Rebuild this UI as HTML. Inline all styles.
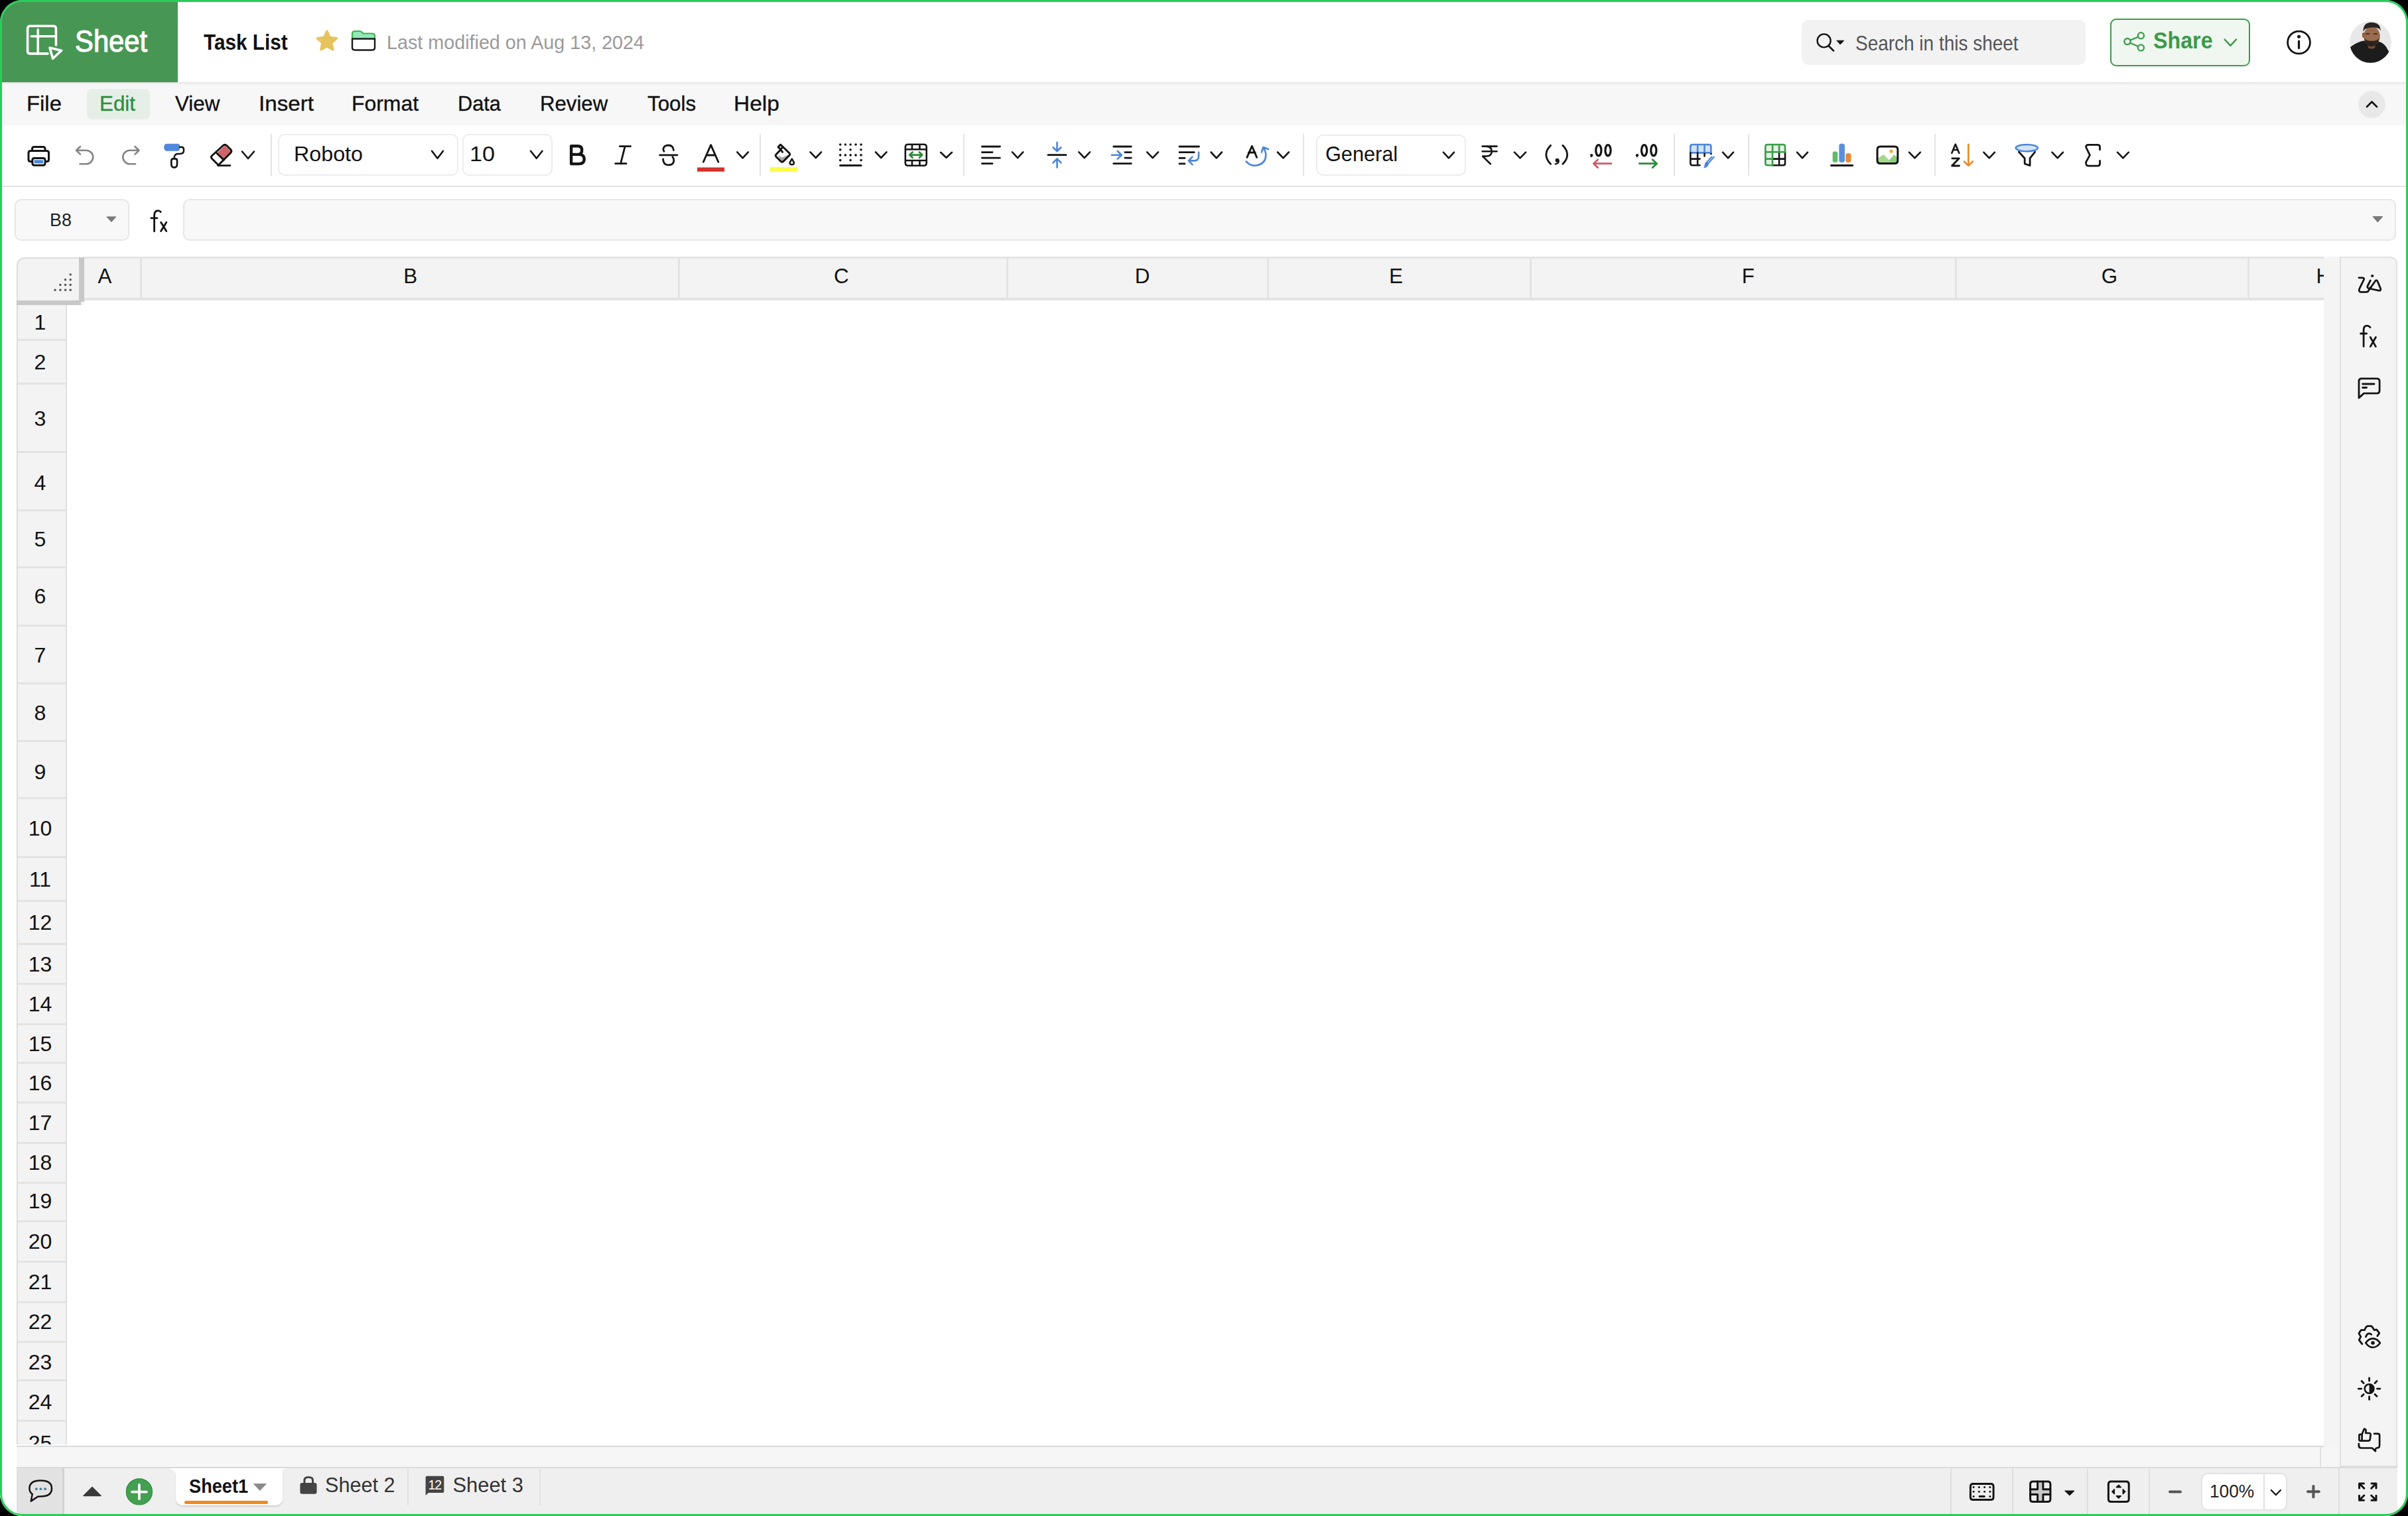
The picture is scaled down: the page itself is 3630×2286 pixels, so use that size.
<!DOCTYPE html>
<html><head><meta charset="utf-8">
<style>
*{box-sizing:border-box;margin:0;padding:0}
html,body{width:3630px;height:2286px;overflow:hidden;background:#000;font-family:"Liberation Sans",sans-serif}
#app{position:absolute;left:0;top:0;width:3630px;height:2286px;border-radius:34px;overflow:hidden;background:#fff}
#ring{position:absolute;left:0;top:0;width:3630px;height:2286px;border-radius:34px;border:3px solid #29cd5b;pointer-events:none;z-index:50}
.a{position:absolute}
.t{position:absolute;white-space:nowrap;line-height:1}
svg{position:absolute;overflow:visible}
</style></head><body>
<div id="app">

<div class="a" style="left:0px;top:0px;width:268px;height:125px;background:#489654"></div>
<div class="t" style="left:112.6px;top:40.0px;font-size:45.36px;color:#fff;font-weight:normal;transform:scaleX(0.9214);transform-origin:0 0;-webkit-text-stroke:1.1px #fff;">Sheet</div>
<div class="t" style="left:307.3px;top:46.7px;font-size:33.77px;color:#111;font-weight:bold;transform:scaleX(0.8800);transform-origin:0 0;">Task List</div>
<div class="t" style="left:582.7px;top:49.1px;font-size:30.29px;color:#9a9a9a;font-weight:normal;transform:scaleX(0.9485);transform-origin:0 0;">Last modified on Aug 13, 2024</div>
<div class="a" style="left:2716px;top:30px;width:428px;height:68px;background:#f2f2f2;border-radius:10px"></div>
<div class="t" style="left:2797.2px;top:50.1px;font-size:31.16px;color:#555;font-weight:normal;transform:scaleX(0.8974);transform-origin:0 0;">Search in this sheet</div>
<div class="a" style="left:3181px;top:28px;width:211px;height:72px;background:#eff7f0;border:2.5px solid #3f9a4d;border-radius:9px"></div>
<div class="t" style="left:3245.5px;top:44.4px;font-size:35.51px;color:#3b9a4b;font-weight:bold;transform:scaleX(0.9077);transform-origin:0 0;">Share</div>
<div class="a" style="left:0px;top:125px;width:3630px;height:64px;background:#f7f7f7"></div>
<div class="a" style="left:0px;top:124px;width:3630px;height:4px;background:linear-gradient(#e2e2e2,#f7f7f7)"></div>
<div class="a" style="left:130.5px;top:134px;width:95px;height:46px;background:#e6efe7;border-radius:8px"></div>
<div class="t" style="left:39.8px;top:140.9px;font-size:31.59px;color:#111;font-weight:normal;transform:scaleX(1.0401);transform-origin:0 0;-webkit-text-stroke:0.35px currentColor;">File</div>
<div class="t" style="left:149.5px;top:140.9px;font-size:31.59px;color:#2e8f3e;font-weight:normal;transform:scaleX(0.9931);transform-origin:0 0;-webkit-text-stroke:0.35px currentColor;">Edit</div>
<div class="t" style="left:263.8px;top:140.9px;font-size:31.59px;color:#111;font-weight:normal;transform:scaleX(0.9931);transform-origin:0 0;-webkit-text-stroke:0.35px currentColor;">View</div>
<div class="t" style="left:389.6px;top:140.9px;font-size:31.59px;color:#111;font-weight:normal;transform:scaleX(1.0502);transform-origin:0 0;-webkit-text-stroke:0.35px currentColor;">Insert</div>
<div class="t" style="left:530.4px;top:140.9px;font-size:31.59px;color:#111;font-weight:normal;transform:scaleX(1.0102);transform-origin:0 0;-webkit-text-stroke:0.35px currentColor;">Format</div>
<div class="t" style="left:690.1px;top:140.9px;font-size:31.59px;color:#111;font-weight:normal;transform:scaleX(0.9714);transform-origin:0 0;-webkit-text-stroke:0.35px currentColor;">Data</div>
<div class="t" style="left:813.5px;top:140.9px;font-size:31.59px;color:#111;font-weight:normal;transform:scaleX(0.9871);transform-origin:0 0;-webkit-text-stroke:0.35px currentColor;">Review</div>
<div class="t" style="left:975.8px;top:140.9px;font-size:31.59px;color:#111;font-weight:normal;transform:scaleX(0.9906);transform-origin:0 0;-webkit-text-stroke:0.35px currentColor;">Tools</div>
<div class="t" style="left:1105.9px;top:140.9px;font-size:31.59px;color:#111;font-weight:normal;transform:scaleX(1.0600);transform-origin:0 0;-webkit-text-stroke:0.35px currentColor;">Help</div>
<div class="a" style="left:3555px;top:137px;width:41px;height:41px;border-radius:50%;background:#e8e8e8"></div>
<div class="a" style="left:0px;top:189px;width:3630px;height:92.5px;background:#fff;border-bottom:2px solid #e4e4e4"></div>
<div class="a" style="left:408px;top:202px;width:2px;height:63px;background:#e4e4e4"></div>
<div class="a" style="left:1145px;top:202px;width:2px;height:63px;background:#e4e4e4"></div>
<div class="a" style="left:1451.5px;top:202px;width:2px;height:63px;background:#e4e4e4"></div>
<div class="a" style="left:1964px;top:202px;width:2px;height:63px;background:#e4e4e4"></div>
<div class="a" style="left:2522.6px;top:202px;width:2px;height:63px;background:#e4e4e4"></div>
<div class="a" style="left:2634.6px;top:202px;width:2px;height:63px;background:#e4e4e4"></div>
<div class="a" style="left:2916.3px;top:202px;width:2px;height:63px;background:#e4e4e4"></div>
<div class="a" style="left:418.6px;top:202.4px;width:272px;height:63px;background:#fff;border:2px solid #ececec;border-radius:10px"></div>
<div class="a" style="left:697.4px;top:202.4px;width:135.3px;height:63px;background:#fff;border:2px solid #ececec;border-radius:10px"></div>
<div class="a" style="left:1983.7px;top:202.5px;width:226.3px;height:62.3px;background:#fff;border:2px solid #ececec;border-radius:10px"></div>
<div class="t" style="left:442.9px;top:218.2px;font-size:30.87px;color:#111;font-weight:normal;transform:scaleX(1.0454);transform-origin:0 0;">Roboto</div>
<div class="t" style="left:708.4px;top:218.2px;font-size:30.87px;color:#111;font-weight:normal;transform:scaleX(1.1069);transform-origin:0 0;">10</div>
<div class="t" style="left:1997.9px;top:216.9px;font-size:31.59px;color:#111;font-weight:normal;transform:scaleX(0.9716);transform-origin:0 0;">General</div>
<div class="a" style="left:22px;top:300px;width:173px;height:63px;background:#f8f8f8;border:2px solid #e6e6e6;border-radius:10px"></div>
<div class="a" style="left:276px;top:300px;width:3336px;height:63px;background:#f8f8f8;border:2px solid #e6e6e6;border-radius:10px"></div>
<div class="t" style="left:74.7px;top:317.7px;font-size:27.25px;color:#222;font-weight:normal;transform:scaleX(0.9843);transform-origin:0 0;">B8</div>
<div class="a" style="left:126px;top:387px;width:3377px;height:66px;background:#f3f3f3;border-top:3px solid #e3e3e3;border-bottom:4px solid #e3e3e3"></div>
<div class="a" style="left:211px;top:387px;width:3px;height:66px;background:#e3e3e3"></div>
<div class="a" style="left:1022px;top:387px;width:3px;height:66px;background:#e3e3e3"></div>
<div class="a" style="left:1516.5px;top:387px;width:3px;height:66px;background:#e3e3e3"></div>
<div class="a" style="left:1910px;top:387px;width:3px;height:66px;background:#e3e3e3"></div>
<div class="a" style="left:2306px;top:387px;width:3px;height:66px;background:#e3e3e3"></div>
<div class="a" style="left:2947px;top:387px;width:3px;height:66px;background:#e3e3e3"></div>
<div class="a" style="left:3388px;top:387px;width:3px;height:66px;background:#e3e3e3"></div>
<div class="t" style="left:147.4px;top:401.2px;font-size:31.30px;color:#111;font-weight:normal;">A</div>
<div class="t" style="left:608.2px;top:401.2px;font-size:31.30px;color:#111;font-weight:normal;">B</div>
<div class="t" style="left:1256.9px;top:401.2px;font-size:31.30px;color:#111;font-weight:normal;">C</div>
<div class="t" style="left:1710.8px;top:401.2px;font-size:31.30px;color:#111;font-weight:normal;">D</div>
<div class="t" style="left:2093.9px;top:401.2px;font-size:31.30px;color:#111;font-weight:normal;">E</div>
<div class="t" style="left:2625.8px;top:401.2px;font-size:31.30px;color:#111;font-weight:normal;">F</div>
<div class="t" style="left:3167.7px;top:401.2px;font-size:31.30px;color:#111;font-weight:normal;">G</div>
<div class="a" style="left:3490px;top:395px;width:13px;height:45px;overflow:hidden"><div class="t" style="left:1.5px;top:6.2px;font-size:31.30px;color:#111;font-weight:normal;">H</div></div>
<div class="a" style="left:25px;top:388px;width:101px;height:72px;background:#f3f3f3;border-top:2px solid #dcdcdc;border-left:2px solid #dcdcdc;border-top-left-radius:12px"></div>
<div class="a" style="left:119px;top:388px;width:8px;height:67px;background:#c8c8c8"></div>
<div class="a" style="left:25px;top:453px;width:97px;height:7px;background:#c8c8c8"></div>
<svg style="left:0;top:0" width="1" height="1"><circle cx="106.2" cy="414" r="1.8" fill="#5a5a5a"/><circle cx="98.5" cy="421.7" r="1.8" fill="#5a5a5a"/><circle cx="106.2" cy="421.7" r="1.8" fill="#5a5a5a"/><circle cx="90.9" cy="429.5" r="1.8" fill="#5a5a5a"/><circle cx="98.5" cy="429.5" r="1.8" fill="#5a5a5a"/><circle cx="106.2" cy="429.5" r="1.8" fill="#5a5a5a"/><circle cx="83" cy="437.2" r="1.8" fill="#5a5a5a"/><circle cx="90.9" cy="437.2" r="1.8" fill="#5a5a5a"/><circle cx="98.5" cy="437.2" r="1.8" fill="#5a5a5a"/><circle cx="106.2" cy="437.2" r="1.8" fill="#5a5a5a"/></svg>
<div class="a" style="left:25px;top:460px;width:76px;height:1717.5px;background:#f3f3f3;border-left:2px solid #dcdcdc;border-right:2px solid #e0e0e0;overflow:hidden" id="rowhdr">
<div class="t" style="left:-6.5px;width:80px;text-align:center;top:10.0px;font-size:32px;color:#111">1</div>
<div class="a" style="left:0;top:51px;width:76px;height:3px;background:#e3e3e3"></div>
<div class="t" style="left:-6.5px;width:80px;text-align:center;top:69.5px;font-size:32px;color:#111">2</div>
<div class="a" style="left:0;top:116.5px;width:76px;height:3px;background:#e3e3e3"></div>
<div class="t" style="left:-6.5px;width:80px;text-align:center;top:154.6px;font-size:32px;color:#111">3</div>
<div class="a" style="left:0;top:220px;width:76px;height:3px;background:#e3e3e3"></div>
<div class="t" style="left:-6.5px;width:80px;text-align:center;top:251.9px;font-size:32px;color:#111">4</div>
<div class="a" style="left:0;top:308.4px;width:76px;height:3px;background:#e3e3e3"></div>
<div class="t" style="left:-6.5px;width:80px;text-align:center;top:337.2px;font-size:32px;color:#111">5</div>
<div class="a" style="left:0;top:394px;width:76px;height:3px;background:#e3e3e3"></div>
<div class="t" style="left:-6.5px;width:80px;text-align:center;top:423.2px;font-size:32px;color:#111">6</div>
<div class="a" style="left:0;top:482px;width:76px;height:3px;background:#e3e3e3"></div>
<div class="t" style="left:-6.5px;width:80px;text-align:center;top:511.5px;font-size:32px;color:#111">7</div>
<div class="a" style="left:0;top:569px;width:76px;height:3px;background:#e3e3e3"></div>
<div class="t" style="left:-6.5px;width:80px;text-align:center;top:599.1px;font-size:32px;color:#111">8</div>
<div class="a" style="left:0;top:656px;width:76px;height:3px;background:#e3e3e3"></div>
<div class="t" style="left:-6.5px;width:80px;text-align:center;top:687.7px;font-size:32px;color:#111">9</div>
<div class="a" style="left:0;top:742px;width:76px;height:3px;background:#e3e3e3"></div>
<div class="t" style="left:-6.5px;width:80px;text-align:center;top:772.5px;font-size:32px;color:#111">10</div>
<div class="a" style="left:0;top:830.5px;width:76px;height:3px;background:#e3e3e3"></div>
<div class="t" style="left:-6.5px;width:80px;text-align:center;top:849.5px;font-size:32px;color:#111">11</div>
<div class="a" style="left:0;top:896.5999999999999px;width:76px;height:3px;background:#e3e3e3"></div>
<div class="t" style="left:-6.5px;width:80px;text-align:center;top:915.4px;font-size:32px;color:#111">12</div>
<div class="a" style="left:0;top:962.2px;width:76px;height:3px;background:#e3e3e3"></div>
<div class="t" style="left:-6.5px;width:80px;text-align:center;top:978.1px;font-size:32px;color:#111">13</div>
<div class="a" style="left:0;top:1022px;width:76px;height:3px;background:#e3e3e3"></div>
<div class="t" style="left:-6.5px;width:80px;text-align:center;top:1038.3px;font-size:32px;color:#111">14</div>
<div class="a" style="left:0;top:1082.7px;width:76px;height:3px;background:#e3e3e3"></div>
<div class="t" style="left:-6.5px;width:80px;text-align:center;top:1097.7px;font-size:32px;color:#111">15</div>
<div class="a" style="left:0;top:1140.8px;width:76px;height:3px;background:#e3e3e3"></div>
<div class="t" style="left:-6.5px;width:80px;text-align:center;top:1156.7px;font-size:32px;color:#111">16</div>
<div class="a" style="left:0;top:1200.7px;width:76px;height:3px;background:#e3e3e3"></div>
<div class="t" style="left:-6.5px;width:80px;text-align:center;top:1216.5px;font-size:32px;color:#111">17</div>
<div class="a" style="left:0;top:1261.8px;width:76px;height:3px;background:#e3e3e3"></div>
<div class="t" style="left:-6.5px;width:80px;text-align:center;top:1277.1px;font-size:32px;color:#111">18</div>
<div class="a" style="left:0;top:1322.4px;width:76px;height:3px;background:#e3e3e3"></div>
<div class="t" style="left:-6.5px;width:80px;text-align:center;top:1335.1px;font-size:32px;color:#111">19</div>
<div class="a" style="left:0;top:1380.3px;width:76px;height:3px;background:#e3e3e3"></div>
<div class="t" style="left:-6.5px;width:80px;text-align:center;top:1395.5px;font-size:32px;color:#111">20</div>
<div class="a" style="left:0;top:1440.7px;width:76px;height:3px;background:#e3e3e3"></div>
<div class="t" style="left:-6.5px;width:80px;text-align:center;top:1456.6px;font-size:32px;color:#111">21</div>
<div class="a" style="left:0;top:1501.6px;width:76px;height:3px;background:#e3e3e3"></div>
<div class="t" style="left:-6.5px;width:80px;text-align:center;top:1517.4px;font-size:32px;color:#111">22</div>
<div class="a" style="left:0;top:1562px;width:76px;height:3px;background:#e3e3e3"></div>
<div class="t" style="left:-6.5px;width:80px;text-align:center;top:1577.8px;font-size:32px;color:#111">23</div>
<div class="a" style="left:0;top:1620.3000000000002px;width:76px;height:3px;background:#e3e3e3"></div>
<div class="t" style="left:-6.5px;width:80px;text-align:center;top:1638.3px;font-size:32px;color:#111">24</div>
<div class="a" style="left:0;top:1681.1999999999998px;width:76px;height:3px;background:#e3e3e3"></div>
<div class="t" style="left:-6.5px;width:80px;text-align:center;top:1699.6px;font-size:32px;color:#111">25</div>
</div>
<div class="a" style="left:25px;top:2177.5px;width:76px;height:2.5px;background:#fafafa"></div>
<div class="a" style="left:25px;top:2180px;width:3478px;height:2px;background:#dadada"></div>
<div class="a" style="left:25px;top:2182px;width:3502px;height:30px;background:#f5f6f5"></div>
<div class="a" style="left:3497px;top:2180px;width:2px;height:32px;background:#e0e0e0"></div>
<div class="a" style="left:25px;top:2212px;width:3589px;height:2px;background:#dadada"></div>
<div class="a" style="left:3503px;top:387px;width:24px;height:1795px;background:#f3f4f3"></div>
<div class="a" style="left:3527px;top:387px;width:87px;height:1825px;background:#f4f4f4;border:2px solid #e0e0e0;border-bottom:2px solid #e0e0e0;border-top-right-radius:10px"></div>
<div class="a" style="left:0px;top:2214px;width:3614px;height:72px;background:#efefef"></div>
<div class="a" style="left:0px;top:2214px;width:25px;height:72px;background:#fff"></div>
<div class="a" style="left:25px;top:2214px;width:70px;height:72px;background:#e2e2e2"></div>
<div class="a" style="left:94.4px;top:2214px;width:2.2px;height:72px;background:#d2d2d2"></div>
<div class="a" style="left:253px;top:2214px;width:181px;height:12px;background:#fff"></div>
<div class="a" style="left:253px;top:2214px;width:12px;height:12px;background:#efefef;border-top-right-radius:12px"></div>
<div class="a" style="left:422px;top:2214px;width:12px;height:12px;background:#efefef;border-top-left-radius:12px"></div>
<div class="a" style="left:265px;top:2214px;width:161px;height:55.5px;background:#fff;border-radius:0 0 10px 10px;box-shadow:0 1.5px 2px rgba(0,0,0,0.13)"></div>
<div class="t" style="left:285.2px;top:2227.0px;font-size:28.70px;color:#111;font-weight:bold;transform:scaleX(0.9477);transform-origin:0 0;">Sheet1</div>
<div class="a" style="left:278.4px;top:2263.3px;width:126px;height:5px;background:#f28a1e;border-radius:3px"></div>
<div class="t" style="left:490.0px;top:2225.2px;font-size:30.87px;color:#333;font-weight:normal;transform:scaleX(0.9921);transform-origin:0 0;">Sheet 2</div>
<div class="t" style="left:682.5px;top:2225.2px;font-size:30.87px;color:#333;font-weight:normal;">Sheet 3</div>
<div class="a" style="left:613.7px;top:2216px;width:2px;height:54px;background:#e0e0e0"></div>
<div class="a" style="left:813px;top:2216px;width:2px;height:54px;background:#e0e0e0"></div>
<div class="a" style="left:2940.3px;top:2214px;width:2px;height:70px;background:#dedede"></div>
<div class="a" style="left:3032.7px;top:2214px;width:2px;height:70px;background:#dedede"></div>
<div class="a" style="left:3146px;top:2214px;width:2px;height:70px;background:#dedede"></div>
<div class="a" style="left:3239px;top:2214px;width:2px;height:70px;background:#dedede"></div>
<div class="a" style="left:3525.3px;top:2214px;width:2px;height:70px;background:#dedede"></div>
<div class="a" style="left:3318px;top:2220.6px;width:130px;height:57.4px;background:#fff;border:2px solid #e2e2e2;border-radius:10px"></div>
<div class="a" style="left:3412.3px;top:2222px;width:2px;height:55px;background:#e2e2e2"></div>
<div class="t" style="left:3330.6px;top:2235.3px;font-size:27.54px;color:#222;font-weight:normal;transform:scaleX(0.9546);transform-origin:0 0;">100%</div>
<svg style="left:0;top:0;z-index:20" width="3630" height="2286" viewBox="0 0 3630 2286">
<path d="M72,80.9 H45.6 Q41.6,80.9 41.6,76.9 V43.3 Q41.6,39.3 45.6,39.3 H80.4 Q84.4,39.3 84.4,43.3 V68" fill="none" stroke="#fff" stroke-width="3.6" stroke-linecap="round" stroke-linejoin="round" />
<path d="M57.2,44.8 V80.9" fill="none" stroke="#fff" stroke-width="3.6" stroke-linecap="round" stroke-linejoin="round" />
<path d="M47.3,54.7 H84.4" fill="none" stroke="#fff" stroke-width="3.6" stroke-linecap="round" stroke-linejoin="round" />
<path d="M75,72 L92.6,76.3 L79.6,88.3 Z" fill="none" stroke="#fff" stroke-width="3.6" stroke-linecap="round" stroke-linejoin="round" />
<path d="M492.9,47.2 L497.1,56.6 L507.4,57.7 L499.7,64.6 L501.8,74.7 L492.9,69.6 L484.0,74.7 L486.1,64.6 L478.4,57.7 L488.7,56.6Z" fill="#e6c35c" stroke="#e6c35c" stroke-width="3.6" stroke-linejoin="round"/>
<path d="M531,58 V51 Q531,47 535,47 H542.5 Q544,47 545.5,48.5 L547.5,50.5 H561 Q565,50.5 565,54.5 V58 Z" fill="#93e8b9" />
<path d="M531,58 V51 Q531,47 535,47 H542.5 Q544,47 545.5,48.5 L547.5,50.5 H561 Q565,50.5 565,54.5 V58" fill="none" stroke="#3cb54b" stroke-width="2.2" stroke-linecap="round" stroke-linejoin="round" />
<path d="M531,58.5 H565 V71.5 Q565,75.5 561,75.5 H535 Q531,75.5 531,71.5 Z" fill="none" stroke="#1a1a1a" stroke-width="2.4" stroke-linecap="round" stroke-linejoin="round" />
<circle cx="2749.6" cy="61.4" r="10" fill="none" stroke="#141414" stroke-width="2.4"/>
<path d="M2757,69.5 L2764,76.5" fill="none" stroke="#141414" stroke-width="2.6" stroke-linecap="round" stroke-linejoin="round" />
<path d="M2768.8,61.2 L2779.6,61.2 L2774.2,67 Z" fill="#141414" stroke="#141414" stroke-width="1" stroke-linejoin="round"/>
<circle cx="3227.4" cy="53.8" r="4.6" fill="none" stroke="#3b9a4b" stroke-width="2.3"/>
<circle cx="3207" cy="62.6" r="4.6" fill="none" stroke="#3b9a4b" stroke-width="2.3"/>
<circle cx="3227.4" cy="72" r="4.6" fill="none" stroke="#3b9a4b" stroke-width="2.3"/>
<path d="M3211.3,60.6 L3223.1,55.8 M3211.3,64.8 L3223.1,70" fill="none" stroke="#3b9a4b" stroke-width="2.3" stroke-linecap="round" stroke-linejoin="round" />
<path d="M3353.7,59.5 L3362.35,68.8 L3371,59.5" fill="none" stroke="#3b9a4b" stroke-width="2.5" stroke-linecap="round" stroke-linejoin="round" />
<circle cx="3465.5" cy="64" r="16.9" fill="none" stroke="#141414" stroke-width="2.8"/>
<circle cx="3465.5" cy="55.3" r="2.5" fill="#141414"/>
<path d="M3465.5,62 V72.6" fill="none" stroke="#141414" stroke-width="3.2" stroke-linecap="round" stroke-linejoin="round" />
<clipPath id="av"><circle cx="3573.5" cy="63.4" r="31.4"/></clipPath>
<g clip-path="url(#av)"><rect x="3540" y="30" width="70" height="70" fill="#e8e8e8"/><path d="M3540,74 Q3550,64 3563,61.5 L3586,62.5 Q3596,66 3600,76 L3606,84 L3600,100 H3540 Z" fill="#1c1c1c"/><path d="M3569,62 L3582,62 L3580,72 Q3575,75 3570,72 Z" fill="#7a4e38"/><ellipse cx="3575.5" cy="54.5" rx="12.3" ry="14.5" fill="#9b6b4d"/><ellipse cx="3563" cy="53" rx="2.2" ry="4" fill="#8e5e42"/><path d="M3562.5,48 Q3562,33.7 3575,33.7 Q3589,34 3588.6,47 L3587,43.5 Q3576,39 3565,44 Z" fill="#2a2522"/><path d="M3564,57 Q3566,70 3575,70.5 Q3584,70 3587,57 Q3584,62.5 3575,61.5 Q3567,62.5 3564,57 Z" fill="#2b2420"/><path d="M3566,51 H3572 M3578,51 H3584" stroke="#2a2220" stroke-width="1.6"/></g>
<path d="M3568,161 L3575.5,153.5 L3583,161" fill="none" stroke="#141414" stroke-width="2.8" stroke-linecap="round" stroke-linejoin="round" />
<path d="M48.5,227 V224.5 Q48.5,221.5 51.5,221.5 H65 Q68,221.5 68,224.5 V227" fill="none" stroke="#141414" stroke-width="3" stroke-linecap="round" stroke-linejoin="round" />
<path d="M48,243.5 H46 Q43,243.5 43,240.5 V230.5 Q43,227.5 46,227.5 H70.5 Q73.5,227.5 73.5,230.5 V240.5 Q73.5,243.5 70.5,243.5 H68.5" fill="none" stroke="#141414" stroke-width="3" stroke-linecap="round" stroke-linejoin="round" />
<path d="M48.8,241.5 Q48.8,238.5 51.8,238.5 H65 Q68,238.5 68,241.5 V246 Q68,249.3 65,249.3 H51.8 Q48.8,249.3 48.8,246 Z" fill="#fff" stroke="#141414" stroke-width="3" stroke-linecap="round" stroke-linejoin="round" />
<path d="M51.5,241.3 H65 V246.2 H51.5 Z" fill="#4a86d8" />
<path d="M121,221 L115,226.8 L121,232.6 M116,226.8 H130 A10.2,10.2 0 0 1 130,247.2 H120.5" fill="none" stroke="#858585" stroke-width="2.6" stroke-linecap="round" stroke-linejoin="round" />
<path d="M203.5,221 L209.5,226.8 L203.5,232.6 M208.5,226.8 H195.5 A10.2,10.2 0 0 0 195.5,247.2 H204" fill="none" stroke="#858585" stroke-width="2.6" stroke-linecap="round" stroke-linejoin="round" />
<path d="M252,216.8 H267 Q271.5,216.8 271.5,222 Q271.5,227.8 267,227.8 H252 Q247.2,227.8 247.2,222 Q247.2,216.8 252,216.8 Z" fill="#5189dc" />
<path d="M271,221.7 H273.5 Q277,221.7 277,225.5 V227 Q277,232 271,232 H267.5 Q263,232.3 262.5,238.5" fill="none" stroke="#141414" stroke-width="2.5" stroke-linecap="round" stroke-linejoin="round" />
<path d="M258.3,242.3 Q258.3,239.3 261.3,239.3 H264 Q267,239.3 267,242.3 V247.5 Q267,252.6 262.6,252.6 Q258.3,252.6 258.3,247.5 Z" fill="none" stroke="#141414" stroke-width="2.7" stroke-linecap="round" stroke-linejoin="round" />
<path d="M339,219.5 L348,228.5 L337,240 L327.3,230.6 Z" fill="#d0646c" />
<path d="M336.5,219.3 Q339,217.3 341.5,219.3 L347.8,225.6 Q350,228 347.8,230.4 L329.2,249 L319.5,239.3 Q317.3,237 319.5,234.8 Z" fill="none" stroke="#141414" stroke-width="2.9" stroke-linecap="round" stroke-linejoin="round" />
<path d="M326.8,231 L337.3,241.3" fill="none" stroke="#141414" stroke-width="2.9" stroke-linecap="round" stroke-linejoin="round" />
<path d="M328.5,249.6 H346.8" fill="none" stroke="#141414" stroke-width="2.9" stroke-linecap="round" stroke-linejoin="round" />
<path d="M365,228.5 L374.0,239 L383,228.5" fill="none" stroke="#141414" stroke-width="2.6" stroke-linecap="round" stroke-linejoin="round" />
<path d="M651,227.7 L659.5,238.8 L668,227.7" fill="none" stroke="#141414" stroke-width="2.6" stroke-linecap="round" stroke-linejoin="round" />
<path d="M800,227.7 L808.75,238.8 L817.5,227.7" fill="none" stroke="#141414" stroke-width="2.6" stroke-linecap="round" stroke-linejoin="round" />
<path d="M861.1,220.3 H871 Q877.2,220.3 877.2,226.5 Q877.2,232.9 871,232.9 H861.1 Z M861.1,232.9 H872.5 Q880.7,232.9 880.7,240 Q880.7,247.1 872.5,247.1 H861.1 Z" fill="none" stroke="#141414" stroke-width="4.4" stroke-linecap="round" stroke-linejoin="round" />
<path d="M934.3,220.6 H950.6 M942.2,220.6 L935.6,246.7 M927.7,246.7 H944" fill="none" stroke="#141414" stroke-width="2.8" stroke-linecap="round" stroke-linejoin="round" />
<path d="M1001,228.2 Q999.5,226 999.8,224.5 Q1001,219 1007.8,219 Q1014.5,219 1015.5,226.5" fill="none" stroke="#141414" stroke-width="2.8" stroke-linecap="round" stroke-linejoin="round" />
<path d="M999.6,240 Q999.8,248.8 1007.8,248.8 Q1015.8,248.8 1015.8,241.8 Q1015.8,238.5 1013.8,236.5" fill="none" stroke="#141414" stroke-width="2.8" stroke-linecap="round" stroke-linejoin="round" />
<path d="M994.6,233.8 H1021" fill="none" stroke="#141414" stroke-width="2.8" stroke-linecap="round" stroke-linejoin="round" />
<path d="M1060.3,244.3 L1071.6,218.6 L1082.9,244.3 M1065,234 H1078.5" fill="none" stroke="#141414" stroke-width="2.8" stroke-linecap="round" stroke-linejoin="round" />
<path d="M1051.1,252.4 H1092.1 V258.8 H1051.1 Z" fill="#d3302a" />
<path d="M1111.3,229.3 L1119.6,238.3 L1127.9,229.3" fill="none" stroke="#141414" stroke-width="2.6" stroke-linecap="round" stroke-linejoin="round" />
<path d="M1172.3,234.3 L1179,237.3 L1189.3,232.9 L1180.3,242.4 Q1179,243.6 1177.7,242.4 Z" fill="#a9a9a9" />
<path d="M1176,226.6 L1169.9,233 Q1168.5,234.6 1169.9,236.2 L1177.4,243.6 Q1179,245 1180.6,243.6 L1190,234.2 Q1191.4,232.6 1190,231 L1180,221.2" fill="none" stroke="#141414" stroke-width="2.9" stroke-linecap="round" stroke-linejoin="round" />
<path d="M1176.6,218 L1180.2,221.6 L1176.6,225.2 L1173,221.6 Z M1176.6,225.2 L1179.6,229.3" fill="none" stroke="#141414" stroke-width="2.9" stroke-linecap="round" stroke-linejoin="round" />
<path d="M1193.8,239.5 L1196.8,244.8 Q1197.3,248.3 1193.8,248.3 Q1190.3,248.3 1190.8,244.8 Z" fill="none" stroke="#141414" stroke-width="2.5" stroke-linecap="round" stroke-linejoin="round" />
<path d="M1160.8,252.1 H1202.3 V258.9 H1160.8 Z" fill="#fdfb48" />
<path d="M1221.5,229.3 L1229.75,238 L1238,229.3" fill="none" stroke="#141414" stroke-width="2.6" stroke-linecap="round" stroke-linejoin="round" />
<circle cx="1266.7" cy="218" r="1.8" fill="#141414"/>
<circle cx="1274.4" cy="218" r="1.8" fill="#141414"/>
<circle cx="1282.1" cy="218" r="1.8" fill="#141414"/>
<circle cx="1290" cy="218" r="1.8" fill="#141414"/>
<circle cx="1298" cy="218" r="1.8" fill="#141414"/>
<circle cx="1266.7" cy="225.8" r="1.8" fill="#141414"/>
<circle cx="1282.1" cy="225.8" r="1.8" fill="#141414"/>
<circle cx="1298" cy="225.8" r="1.8" fill="#141414"/>
<circle cx="1266.7" cy="233.9" r="1.8" fill="#141414"/>
<circle cx="1274.4" cy="233.9" r="1.8" fill="#141414"/>
<circle cx="1282.1" cy="233.9" r="1.8" fill="#141414"/>
<circle cx="1290" cy="233.9" r="1.8" fill="#141414"/>
<circle cx="1298" cy="233.9" r="1.8" fill="#141414"/>
<circle cx="1266.7" cy="241.6" r="1.8" fill="#141414"/>
<circle cx="1282.1" cy="241.6" r="1.8" fill="#141414"/>
<circle cx="1298" cy="241.6" r="1.8" fill="#141414"/>
<path d="M1266.7,249.5 H1298" fill="none" stroke="#141414" stroke-width="3.2" stroke-linecap="round" stroke-linejoin="round" />
<path d="M1320,229.3 L1328.2,238 L1336.4,229.3" fill="none" stroke="#141414" stroke-width="2.6" stroke-linecap="round" stroke-linejoin="round" />
<path d="M1368.8,217.8 H1392.7 Q1396.7,217.8 1396.7,221.8 V245.7 Q1396.7,249.7 1392.7,249.7 H1368.8 Q1364.8,249.7 1364.8,245.7 V221.8 Q1364.8,217.8 1368.8,217.8 Z M1364.8,225.3 H1396.7 M1364.8,242 H1396.7 M1374.9,217.8 V225.3 M1386.4,217.8 V225.3 M1374.9,242 V249.7 M1386.4,242 V249.7" fill="none" stroke="#141414" stroke-width="2.6" stroke-linecap="round" stroke-linejoin="round" />
<path d="M1371.2,233.6 H1390.3 M1375.6,229.4 L1371.2,233.6 L1375.6,237.8 M1385.9,229.4 L1390.3,233.6 L1385.9,237.8" fill="none" stroke="#2e8b3a" stroke-width="2.8" stroke-linecap="round" stroke-linejoin="round" />
<path d="M1418,229.8 L1426.5,237.7 L1435,229.8" fill="none" stroke="#141414" stroke-width="2.6" stroke-linecap="round" stroke-linejoin="round" />
<path d="M1480.4,221 H1507.4 M1480.4,229.6 H1496 M1480.4,238.1 H1507.4 M1480.4,246.7 H1496" fill="none" stroke="#141414" stroke-width="2.8" stroke-linecap="round" stroke-linejoin="round" />
<path d="M1526,229.3 L1534.1,238.1 L1542.2,229.3" fill="none" stroke="#141414" stroke-width="2.6" stroke-linecap="round" stroke-linejoin="round" />
<path d="M1580,233.7 H1607" fill="none" stroke="#141414" stroke-width="2.8" stroke-linecap="round" stroke-linejoin="round" />
<path d="M1593.5,214.7 V227.5 M1587.5,222.3 L1593.5,228 L1599.5,222.3 M1593.5,252.6 V239.8 M1587.5,245.4 L1593.5,239.4 L1599.5,245.4" fill="none" stroke="#4a86d8" stroke-width="2.6" stroke-linecap="round" stroke-linejoin="round" />
<path d="M1626.4,229.3 L1634.7,238.1 L1643,229.3" fill="none" stroke="#141414" stroke-width="2.6" stroke-linecap="round" stroke-linejoin="round" />
<path d="M1678.7,221 H1705.2 M1695.8,229.6 H1705.2 M1695.8,238.1 H1705.2 M1678.7,246.7 H1705.2" fill="none" stroke="#141414" stroke-width="2.8" stroke-linecap="round" stroke-linejoin="round" />
<path d="M1675.8,233.7 H1690.5 M1684.6,227.8 L1690.8,233.7 L1684.6,239.6" fill="none" stroke="#4a86d8" stroke-width="2.6" stroke-linecap="round" stroke-linejoin="round" />
<path d="M1729.2,229.3 L1737.6,238.1 L1746,229.3" fill="none" stroke="#141414" stroke-width="2.6" stroke-linecap="round" stroke-linejoin="round" />
<path d="M1778,221 H1807.5 M1778,229.7 H1800.2 M1778,238.4 H1786 M1778,246.9 H1786" fill="none" stroke="#141414" stroke-width="2.8" stroke-linecap="round" stroke-linejoin="round" />
<path d="M1807,229.6 V235.5 Q1807,242.4 1800,242.4 H1792.3 M1797.4,236.6 L1791.7,242.4 L1797.4,248.2" fill="none" stroke="#4a86d8" stroke-width="2.6" stroke-linecap="round" stroke-linejoin="round" />
<path d="M1825.6,229.5 L1833.75,238.4 L1841.9,229.5" fill="none" stroke="#141414" stroke-width="2.6" stroke-linecap="round" stroke-linejoin="round" />
<path d="M1879.8,237.4 L1887.3,220.3 L1894.6,237.4 M1882.2,230 H1892.2" fill="none" stroke="#141414" stroke-width="2.8" stroke-linecap="round" stroke-linejoin="round" />
<path d="M1878.6,243.4 Q1884,249.8 1891.5,249.8 Q1909,248 1908.2,232 Q1907.5,226.5 1904.5,222.5 M1901.8,229.6 L1904.3,222 L1912,225" fill="none" stroke="#4a86d8" stroke-width="2.6" stroke-linecap="round" stroke-linejoin="round" />
<path d="M1926,229.5 L1934.4,238.4 L1942.8,229.5" fill="none" stroke="#141414" stroke-width="2.6" stroke-linecap="round" stroke-linejoin="round" />
<path d="M2175.8,229.6 L2183.9,238.3 L2192,229.6" fill="none" stroke="#141414" stroke-width="2.6" stroke-linecap="round" stroke-linejoin="round" />
<path d="M2234.6,220.6 H2256.5 M2234.6,228.3 H2256.5 M2240,220.6 Q2248.8,220.8 2248.8,228.3 Q2248.6,235.6 2240,235.6 H2235 L2246.9,247.2" fill="none" stroke="#141414" stroke-width="2.6" stroke-linecap="round" stroke-linejoin="round" />
<path d="M2283,229.6 L2291.5,238.3 L2300,229.6" fill="none" stroke="#141414" stroke-width="2.6" stroke-linecap="round" stroke-linejoin="round" />
<path d="M2337.6,219.2 Q2330.8,226 2330.8,233.2 Q2330.8,240.5 2337.6,247.2 M2355.8,219.2 Q2362.6,226 2362.6,233.2 Q2362.6,240.5 2355.8,247.2" fill="none" stroke="#141414" stroke-width="2.8" stroke-linecap="round" stroke-linejoin="round" />
<circle cx="2347.5" cy="241.8" r="3" fill="#141414"/>
<path d="M2349.8,242.5 Q2349.8,246.5 2344.5,247.3" fill="none" stroke="#141414" stroke-width="2.2" stroke-linecap="round" stroke-linejoin="round" />
<circle cx="2399.2" cy="234.2" r="2.1" fill="#141414"/>
<path d="M2400,234.8 L2398.9,236.5" fill="none" stroke="#141414" stroke-width="1.5" stroke-linecap="round" stroke-linejoin="round" />
<ellipse cx="2409.8" cy="226.7" rx="4.1" ry="8.1" fill="none" stroke="#141414" stroke-width="3.2"/>
<ellipse cx="2424" cy="226.7" rx="4.1" ry="8.1" fill="none" stroke="#141414" stroke-width="3.2"/>
<circle cx="2468.0" cy="234.2" r="2.1" fill="#141414"/>
<path d="M2468.8,234.8 L2467.7000000000003,236.5" fill="none" stroke="#141414" stroke-width="1.5" stroke-linecap="round" stroke-linejoin="round" />
<ellipse cx="2478.6000000000004" cy="226.7" rx="4.1" ry="8.1" fill="none" stroke="#141414" stroke-width="3.2"/>
<ellipse cx="2492.8" cy="226.7" rx="4.1" ry="8.1" fill="none" stroke="#141414" stroke-width="3.2"/>
<path d="M2402.3,246.7 H2429 M2408.6,240.7 L2402.3,246.7 L2408.6,252.7" fill="none" stroke="#cc5a68" stroke-width="2.7" stroke-linecap="round" stroke-linejoin="round" />
<path d="M2471.3,246.7 H2497.7 M2491.2,240.7 L2497.5,246.7 L2491.2,252.7" fill="none" stroke="#2a8a3a" stroke-width="2.7" stroke-linecap="round" stroke-linejoin="round" />
<path d="M2548.3,230.4 V221 Q2548.3,218 2551.3,218 H2576.3 Q2579.3,218 2579.3,221 V230.4 Z" fill="#d3e2f7" />
<path d="M2548.3,230.4 V221 Q2548.3,218 2551.3,218 H2576.3 Q2579.3,218 2579.3,221 V230.4 H2548.3 M2559.1,218 V230.4 M2569.5,218 V230.4" fill="none" stroke="#4a86d8" stroke-width="2.6" stroke-linecap="round" stroke-linejoin="round" />
<path d="M2548.3,230.4 V246 Q2548.3,249.2 2551.5,249.2 H2562.5 M2548.3,239.6 H2562.5 M2559.1,230.4 V249.2 M2569.5,231.5 V235.5" fill="none" stroke="#141414" stroke-width="2.6" stroke-linecap="round" stroke-linejoin="round" />
<circle cx="2579.4" cy="232" r="1.4" fill="#141414"/>
<path d="M2584,236.5 L2575,246.5 M2580.5,236.5 L2573,244.5" fill="none" stroke="#4a86d8" stroke-width="2" stroke-linecap="round" stroke-linejoin="round" />
<path d="M2572.5,244 Q2576.5,245 2575.5,248.5 Q2573.5,253 2568,253.5 Q2569.5,251.5 2569.8,248 Q2570,244.5 2572.5,244 Z" fill="#4a86d8" />
<path d="M2597,229.6 L2605.0,238.3 L2613,229.6" fill="none" stroke="#141414" stroke-width="2.6" stroke-linecap="round" stroke-linejoin="round" />
<path d="M2661.3,229.2 V221 Q2661.3,218 2664.3,218 H2688 Q2691,218 2691,221 V229.2 H2672 V249.2 H2664.3 Q2661.3,249.2 2661.3,246.2 Z" fill="#e3f2e3" />
<path d="M2672,249.2 H2688 Q2691,249.2 2691,246.2 V229.2 M2672,239.6 H2691 M2682,229.2 V249.2" fill="none" stroke="#141414" stroke-width="2.6" stroke-linecap="round" stroke-linejoin="round" />
<path d="M2691,229.2 V221 Q2691,218 2688,218 H2664.3 Q2661.3,218 2661.3,221 V246.2 Q2661.3,249.2 2664.3,249.2 H2672 M2661.3,229.2 H2691 M2661.3,239.6 H2672 M2672,218 V249.2 M2682,218 V229.2" fill="none" stroke="#3b9b48" stroke-width="2.6" stroke-linecap="round" stroke-linejoin="round" />
<path d="M2709,229.6 L2717.0,238.3 L2725,229.6" fill="none" stroke="#141414" stroke-width="2.6" stroke-linecap="round" stroke-linejoin="round" />
<path d="M2762.6,231.3 Q2762.6,228.3 2766.4,228.3 Q2770.3,228.3 2770.3,231.3 V242 Q2770.3,244.9 2766.4,244.9 Q2762.6,244.9 2762.6,242 Z" fill="#63b96a" />
<path d="M2772.3,219.8 Q2772.3,216.6 2776.6,216.6 Q2780.9,216.6 2780.9,219.8 V242 Q2780.9,244.9 2776.6,244.9 Q2772.3,244.9 2772.3,242 Z" fill="#5b8fdc" />
<path d="M2782.2,233.8 Q2782.2,230.9 2786.3,230.9 Q2790.5,230.9 2790.5,233.8 V242 Q2790.5,244.9 2786.3,244.9 Q2782.2,244.9 2782.2,242 Z" fill="#e88a35" />
<path d="M2760.5,249.6 H2792.7" fill="none" stroke="#141414" stroke-width="3" stroke-linecap="round" stroke-linejoin="round" />
<path d="M2830,245 L2830,239.5 L2839.3,233 L2848,241.5 L2855.5,233.2 L2861,239 V246.3 H2830 Z" fill="#a5d98c" />
<path d="M2848,241.5 L2855.5,233.2 L2861,239 V246.3 H2852 Z" fill="#8ccf7a" />
<circle cx="2851" cy="228" r="2.6" fill="#eea53a"/>
<path d="M2834.5,221 H2856.3 Q2860.8,221 2860.8,225.5 V242 Q2860.8,246.5 2856.3,246.5 H2834.5 Q2830,246.5 2830,242 V225.5 Q2830,221 2834.5,221 Z" fill="none" stroke="#141414" stroke-width="3" stroke-linecap="round" stroke-linejoin="round" />
<path d="M2878,229.6 L2886.4,238.3 L2894.8,229.6" fill="none" stroke="#141414" stroke-width="2.6" stroke-linecap="round" stroke-linejoin="round" />
<path d="M2942.3,230.7 L2947.8,217.6 L2953.3,230.7 M2944.2,226 H2951.4" fill="none" stroke="#141414" stroke-width="2.6" stroke-linecap="round" stroke-linejoin="round" />
<path d="M2942.8,238.8 H2953.3 L2942.5,250 H2953.5" fill="none" stroke="#141414" stroke-width="2.8" stroke-linecap="round" stroke-linejoin="round" />
<path d="M2967.3,217.8 V249.8 M2960.9,243.5 L2967.3,249.9 L2973.8,243.5" fill="none" stroke="#e8892c" stroke-width="2.6" stroke-linecap="round" stroke-linejoin="round" />
<path d="M2990.4,229.6 L2998.7,238.3 L3007,229.6" fill="none" stroke="#141414" stroke-width="2.6" stroke-linecap="round" stroke-linejoin="round" />
<path d="M3043.4,229 L3052.2,238.7 V247 L3060.1,249.6 V238.7 L3067.7,229" fill="none" stroke="#141414" stroke-width="2.8" stroke-linecap="round" stroke-linejoin="round" />
<ellipse cx="3055.3" cy="223.1" rx="16.6" ry="5.1" fill="#d5e3f5" stroke="#4a86d8" stroke-width="2.5"/>
<path d="M3093.5,229.6 L3101.75,238.3 L3110,229.6" fill="none" stroke="#141414" stroke-width="2.6" stroke-linecap="round" stroke-linejoin="round" />
<path d="M3165.5,225.8 V221.5 Q3165.5,218.3 3162,218.3 H3148 Q3144.4,218.3 3144.6,222 L3150.4,233.9 L3144.5,244.6 Q3144.4,250.2 3148,250.2 H3162 Q3165.5,250.2 3165.5,246.5 V242.5" fill="none" stroke="#141414" stroke-width="2.8" stroke-linecap="round" stroke-linejoin="round" />
<path d="M3192,229.6 L3200.4,238.3 L3208.8,229.6" fill="none" stroke="#141414" stroke-width="2.6" stroke-linecap="round" stroke-linejoin="round" />
<path d="M160.9,326.9 L175,326.9 L167.95,334.6 Z" fill="#7a7a7a" stroke="#7a7a7a" stroke-width="1" stroke-linejoin="round"/>
<path d="M232.6,348.8 V325 Q232.6,317.6 238.2,317.6 Q240.8,317.6 242.3,319.6 M227.8,328.9 H236.9" fill="none" stroke="#141414" stroke-width="2.8" stroke-linecap="round" stroke-linejoin="round" />
<path d="M242.6,335.2 L250.8,348.6 M250.8,335.2 L242.6,348.6" fill="none" stroke="#141414" stroke-width="2.8" stroke-linecap="round" stroke-linejoin="round" />
<path d="M3577,326.5 L3591.8,326.5 L3584.4,335 Z" fill="#7a7a7a" stroke="#7a7a7a" stroke-width="1" stroke-linejoin="round"/>
<path d="M3556,418.8 H3561.5 Q3564.5,419 3563.3,422 L3556.7,435.5 Q3555.2,440.4 3559.5,440.4 H3567 Q3569.5,440.4 3570.7,438.2 L3573,433.5" fill="none" stroke="#141414" stroke-width="2.8" stroke-linecap="round" stroke-linejoin="round" />
<path d="M3573.3,423 L3569.2,431 Q3567.8,434 3571,435 L3586,438.2 Q3589.5,438.5 3588.6,435 L3584.2,424.5 Q3582.5,421 3580.3,424.2 L3573.6,434" fill="none" stroke="#141414" stroke-width="2.8" stroke-linecap="round" stroke-linejoin="round" />
<circle cx="3576.2" cy="416" r="2.1" fill="#141414"/>
<path d="M3563.1,522.4 V497.5 Q3563.1,491.2 3568.3,491.2 Q3571,491.2 3573,493.6 M3558.6,503 H3567.6" fill="none" stroke="#141414" stroke-width="2.8" stroke-linecap="round" stroke-linejoin="round" />
<path d="M3573.3,508.5 L3581.4,522.6 M3581.4,508.5 L3573.3,522.6" fill="none" stroke="#141414" stroke-width="2.8" stroke-linecap="round" stroke-linejoin="round" />
<path d="M3560,570.8 H3583 Q3587.1,570.8 3587.1,574.9 V589 Q3587.1,593.1 3583,593.1 H3563.5 L3556,600 V574.9 Q3556,570.8 3560,570.8 Z" fill="none" stroke="#141414" stroke-width="2.8" stroke-linecap="round" stroke-linejoin="round" />
<path d="M3561.6,579 H3579 M3561.6,584.5 H3567.6" fill="none" stroke="#141414" stroke-width="2.8" stroke-linecap="round" stroke-linejoin="round" />
<path d="M3560.8,2026.7 L3556.3,2020.7 L3558.8,2015.7 L3556,2010.6 L3559.3,2005.6 L3564.5,2005.6 L3566.5,2001.5 L3568.8,1999.6 H3574.6 L3576.5,2001.5 L3579.3,2005.6 L3582.6,2004.9 L3586.8,2010.2 L3583.9,2014.6" fill="none" stroke="#141414" stroke-width="2.8" stroke-linecap="round" stroke-linejoin="round" />
<path d="M3566.5,2015.8 Q3568,2010.8 3571.5,2010.8 Q3573.5,2010.8 3574.8,2012.3" fill="none" stroke="#141414" stroke-width="2.8" stroke-linecap="round" stroke-linejoin="round" />
<path d="M3566.2,2025 Q3571,2018.4 3577,2018.4 Q3583,2018.4 3588,2025 Q3583,2031.8 3577,2031.8 Q3571,2031.8 3566.2,2025 Z" fill="none" stroke="#141414" stroke-width="2.6" stroke-linecap="round" stroke-linejoin="round" />
<circle cx="3577" cy="2025" r="2.8" fill="#141414"/>
<circle cx="3571.6" cy="2094.1" r="6.9" fill="none" stroke="#141414" stroke-width="2.6"/>
<path d="M3571.6,2087.2 A6.9,6.9 0 0 1 3571.6,2101.0 Z" fill="#141414" />
<path d="M3583.5,2094.1 L3587.9,2094.1" fill="none" stroke="#141414" stroke-width="2.8" stroke-linecap="round" stroke-linejoin="round" />
<path d="M3580.0,2102.5 L3583.1,2105.6" fill="none" stroke="#141414" stroke-width="2.8" stroke-linecap="round" stroke-linejoin="round" />
<path d="M3571.6,2106.0 L3571.6,2110.4" fill="none" stroke="#141414" stroke-width="2.8" stroke-linecap="round" stroke-linejoin="round" />
<path d="M3563.2,2102.5 L3560.1,2105.6" fill="none" stroke="#141414" stroke-width="2.8" stroke-linecap="round" stroke-linejoin="round" />
<path d="M3559.7,2094.1 L3555.3,2094.1" fill="none" stroke="#141414" stroke-width="2.8" stroke-linecap="round" stroke-linejoin="round" />
<path d="M3563.2,2085.7 L3560.1,2082.6" fill="none" stroke="#141414" stroke-width="2.8" stroke-linecap="round" stroke-linejoin="round" />
<path d="M3571.6,2082.2 L3571.6,2077.8" fill="none" stroke="#141414" stroke-width="2.8" stroke-linecap="round" stroke-linejoin="round" />
<path d="M3580.0,2085.7 L3583.1,2082.6" fill="none" stroke="#141414" stroke-width="2.8" stroke-linecap="round" stroke-linejoin="round" />
<path d="M3556.4,2164.5 Q3556.4,2162.8 3558.2,2162.8 H3560.6 V2172.6 H3558.2 Q3556.4,2172.6 3556.4,2170.8 Z" fill="none" stroke="#141414" stroke-width="2.7" stroke-linecap="round" stroke-linejoin="round" />
<path d="M3560.6,2162.8 L3564,2154.6 Q3566.6,2155 3566.6,2157.5 L3566.4,2161 H3571.6 Q3573.9,2161.3 3573.6,2163.6 L3572.8,2170.3 Q3572.2,2172.6 3569.8,2172.6 H3560.6" fill="none" stroke="#141414" stroke-width="2.7" stroke-linecap="round" stroke-linejoin="round" />
<path d="M3579.1,2161.9 H3584.5 Q3587.1,2161.9 3587.1,2164.6 V2179.2 Q3587.1,2183.5 3582.7,2183.5 Q3581,2183.8 3580.9,2186 V2188.2 L3575.8,2183.5 H3559.5 Q3555.9,2183.5 3555.9,2180 V2177" fill="none" stroke="#141414" stroke-width="2.7" stroke-linecap="round" stroke-linejoin="round" />
<path d="M48.7,2252.9 Q44.4,2249.5 44.4,2244.4 Q44.4,2232.4 61.2,2232.4 Q78,2232.4 78,2244.4 Q78,2256.4 61.2,2256.4 Q58.5,2256.4 57,2256.8 L46.8,2263.6 Z" fill="none" stroke="#141414" stroke-width="2.5" stroke-linecap="round" stroke-linejoin="round" />
<circle cx="54.8" cy="2245.2" r="1.9" fill="#3c7fa0"/>
<circle cx="61.4" cy="2245.2" r="1.9" fill="#3c7fa0"/>
<circle cx="68.1" cy="2245.2" r="1.9" fill="#3c7fa0"/>
<path d="M126,2255.5 L139,2242.6 L152,2255.5 Z" fill="#3a3a3a" stroke="#3a3a3a" stroke-width="1.5" stroke-linejoin="round"/>
<circle cx="209.9" cy="2249.4" r="19.6" fill="#449f51" stroke="#2f8e3e" stroke-width="1.2"/>
<path d="M199,2249.6 H220.8 M209.9,2239 V2260.2" fill="none" stroke="#fff" stroke-width="3.8" stroke-linecap="round" stroke-linejoin="round" />
<path d="M382.4,2237.6 L401.3,2237.6 L391.85,2247.5 Z" fill="#8a8a8a" stroke="#8a8a8a" stroke-width="1" stroke-linejoin="round"/>
<path d="M455.4,2236.1 H474.5 Q477.5,2236.1 477.5,2239.1 V2249.8 Q477.5,2252.8 474.5,2252.8 H455.4 Q452.4,2252.8 452.4,2249.8 V2239.1 Q452.4,2236.1 455.4,2236.1 Z" fill="#444" />
<path d="M458.9,2237 V2232.5 Q458.9,2227.6 465.2,2227.6 Q471.5,2227.6 471.5,2232.5 V2237" fill="none" stroke="#444" stroke-width="3" stroke-linecap="round" stroke-linejoin="round" />
<path d="M643.6,2225.8 H667.3 Q669.3,2225.8 669.3,2227.8 V2248.9 Q669.3,2250.9 667.3,2250.9 H646 L641.6,2255 V2227.8 Q641.6,2225.8 643.6,2225.8 Z" fill="#444" />
<text x="655.3" y="2246" text-anchor="middle" font-family="Liberation Sans" font-size="19.5" fill="#fff" letter-spacing="-1">12</text>
<path d="M2974.4,2237.4 H3001.1 Q3005.1,2237.4 3005.1,2241.4 V2257.6 Q3005.1,2261.6 3001.1,2261.6 H2974.4 Q2970.4,2261.6 2970.4,2257.6 V2241.4 Q2970.4,2237.4 2974.4,2237.4 Z" fill="none" stroke="#141414" stroke-width="3" stroke-linecap="round" stroke-linejoin="round" />
<circle cx="2975.1" cy="2242.4" r="1.5" fill="#141414"/>
<circle cx="2983.4" cy="2242.4" r="1.5" fill="#141414"/>
<circle cx="2991.6" cy="2242.4" r="1.5" fill="#141414"/>
<circle cx="2999.9" cy="2242.4" r="1.5" fill="#141414"/>
<circle cx="2975.1" cy="2249.3" r="1.5" fill="#141414"/>
<circle cx="2983.4" cy="2249.3" r="1.5" fill="#141414"/>
<circle cx="2991.6" cy="2249.3" r="1.5" fill="#141414"/>
<circle cx="2999.9" cy="2249.3" r="1.5" fill="#141414"/>
<circle cx="2975.1" cy="2256.4" r="1.5" fill="#141414"/><circle cx="2999.9" cy="2256.4" r="1.5" fill="#141414"/>
<path d="M2984.2,2256.4 H2991.3" fill="none" stroke="#141414" stroke-width="3" stroke-linecap="round" stroke-linejoin="round" />
<path d="M3071.6,2235.5 H3079.9 V2245.7 H3089.5 V2253.4 H3079.9 V2263 H3071.6 V2253.4 H3062 V2245.7 H3071.6 Z" fill="#c8c8c8" />
<path d="M3064.6,2234.1 H3086.9 Q3090.9,2234.1 3090.9,2238.1 V2260.4 Q3090.9,2264.4 3086.9,2264.4 H3064.6 Q3060.6,2264.4 3060.6,2260.4 V2238.1 Q3060.6,2234.1 3064.6,2234.1 Z" fill="none" stroke="#141414" stroke-width="3" stroke-linecap="round" stroke-linejoin="round" />
<path d="M3071.6,2234.1 V2245.7 H3060.6 M3079.9,2234.1 V2245.7 H3090.9 M3071.6,2264.4 V2253.4 H3060.6 M3079.9,2264.4 V2253.4 H3090.9" fill="none" stroke="#141414" stroke-width="3" stroke-linecap="round" stroke-linejoin="round" />
<path d="M3112.6,2248 L3127,2248 L3119.8,2255 Z" fill="#141414" stroke="#141414" stroke-width="1" stroke-linejoin="round"/>
<path d="M3182.4,2234.1 H3205.2 Q3209.2,2234.1 3209.2,2238.1 V2260.4 Q3209.2,2264.4 3205.2,2264.4 H3182.4 Q3178.4,2264.4 3178.4,2260.4 V2238.1 Q3178.4,2234.1 3182.4,2234.1 Z" fill="none" stroke="#141414" stroke-width="3" stroke-linecap="round" stroke-linejoin="round" />
<path d="M3190.3,2242.8 L3193.8,2239.3 L3197.3,2242.8 Z M3190.3,2255.8 L3193.8,2259.3 L3197.3,2255.8 Z M3187.3,2245.8 L3183.8,2249.3 L3187.3,2252.8 Z M3200.3,2245.8 L3203.8,2249.3 L3200.3,2252.8 Z" fill="#141414" stroke="#141414" stroke-width="1.5" stroke-linejoin="round"/>
<path d="M3271,2249.6 H3287" fill="none" stroke="#555" stroke-width="4" stroke-linecap="round" stroke-linejoin="round" />
<path d="M3479,2249.2 H3495.8 M3487.4,2241 V2257.5" fill="none" stroke="#555" stroke-width="4" stroke-linecap="round" stroke-linejoin="round" />
<path d="M3423.8,2247 L3430.8500000000004,2254.2 L3437.9,2247" fill="none" stroke="#141414" stroke-width="2.3" stroke-linecap="round" stroke-linejoin="round" />
<path d="M3556.5,2244 V2237 H3563.5 M3556.8,2237.3 L3563.8,2244.3 M3582,2244 V2237 H3575 M3581.7,2237.3 L3574.7,2244.3 M3556.5,2255.3 V2262.3 H3563.5 M3556.8,2262 L3563.8,2255 M3582,2255.3 V2262.3 H3575 M3581.7,2262 L3574.7,2255" fill="none" stroke="#141414" stroke-width="3" stroke-linecap="round" stroke-linejoin="round" />
</svg>
</div>
<div id="ring"></div>
</body></html>
